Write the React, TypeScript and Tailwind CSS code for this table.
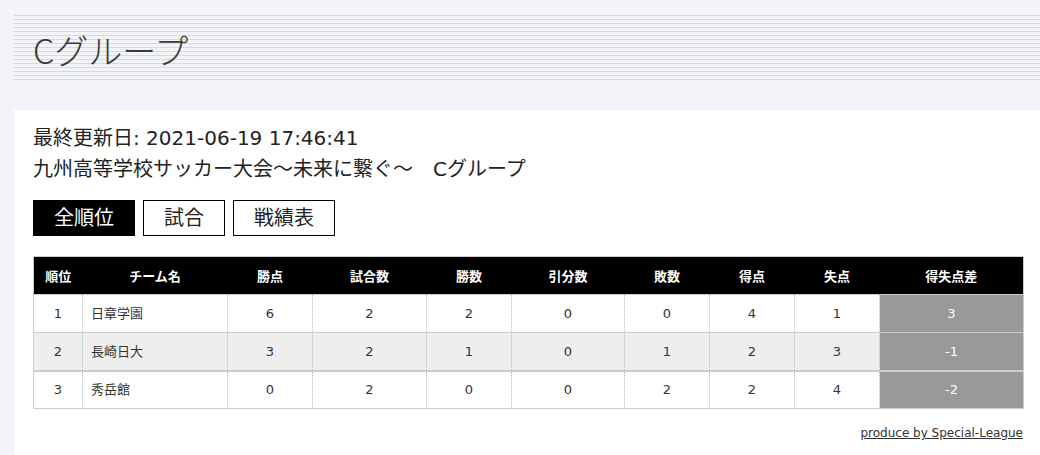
import React from "react";

const FONT = { fontFamily: '"DejaVu Sans", "Noto Sans CJK JP", sans-serif' };

const headers = ["順位", "チーム名", "勝点", "試合数", "勝数", "引分数", "敗数", "得点", "失点", "得失点差"];
const widths = [49, 145, 85, 114, 85, 113, 85, 85, 85, 144];
const rows = [
  ["1", "日章学園", "6", "2", "2", "0", "0", "4", "1", "3"],
  ["2", "長崎日大", "3", "2", "1", "0", "1", "2", "3", "-1"],
  ["3", "秀岳館", "0", "2", "0", "0", "2", "2", "4", "-2"],
];

export default function App() {
  return (
    <div
      className="w-[1040px] h-[455px] overflow-hidden bg-[#f3f4f7] pt-[15px] pl-[14px]"
      style={FONT}
    >
      <div className="h-[68px] bg-[image:repeating-linear-gradient(to_bottom,#d3dae3_0px,#d3dae3_1px,transparent_1px,transparent_4px)] flex items-center pl-[19px]">
        <h1
          className="text-[34px] leading-none text-[#3a3a3a] font-light mt-[1px]"
          style={{ fontFamily: '"Noto Sans CJK JP", sans-serif' }}
        >
          Cグループ
        </h1>
      </div>
      <div className="mt-[27px] bg-white pl-[19px] pr-[16px] pt-[13px] h-[400px]">
        <div className="text-[20px] leading-[31px] text-[#222]">
          <div>最終更新日: 2021-06-19 17:46:41</div>
          <div>九州高等学校サッカー大会〜未来に繋ぐ〜　Cグループ</div>
        </div>
        <div className="flex gap-2 mt-[15px]">
          <div className="h-[36px] px-5 flex items-center bg-black border border-black text-white text-[20px]">全順位</div>
          <div className="h-[36px] px-5 flex items-center bg-white border border-black text-[#222] text-[20px]">試合</div>
          <div className="h-[36px] px-5 flex items-center bg-white border border-black text-[#222] text-[20px]">戦績表</div>
        </div>
        <table className="mt-[20px] w-[990px] table-fixed border-collapse border border-[#cccccc] text-[13px] text-[#333]">
          <colgroup>
            {widths.map((w, i) => (
              <col key={i} style={{ width: w }} />
            ))}
          </colgroup>
          <thead>
            <tr className="bg-black h-[38px]">
              {headers.map((h) => (
                <th
                  key={h}
                  className="text-white font-bold text-[13px] text-center"
                  style={{ fontFamily: '"Noto Sans CJK JP", sans-serif' }}
                >
                  {h}
                </th>
              ))}
            </tr>
          </thead>
          <tbody>
            {rows.map((r, ri) => (
              <tr
                key={ri}
                className={
                  (ri === 1 ? "bg-[#eeeeee] " : "bg-white ") +
                  (ri === 2 ? "border-t-2 " : "border-t ") +
                  "border-[#cccccc] h-[38px]"
                }
              >
                {r.map((c, ci) => (
                  <td
                    key={ci}
                    className={
                      (ci > 0 ? "border-l border-dotted border-l-[#bbbbbb] " : "") +
                      (ci === 1 ? "text-left pl-[8px] " : "text-center ") +
                      (ci === 9 ? "bg-[#999999] text-white " : "")
                    }
                  >
                    {c}
                  </td>
                ))}
              </tr>
            ))}
          </tbody>
        </table>
        <div className="w-[990px] flex justify-end mt-[15px]">
          <span className="text-[12px] text-[#333] underline">produce by Special-League</span>
        </div>
      </div>
    </div>
  );
}
